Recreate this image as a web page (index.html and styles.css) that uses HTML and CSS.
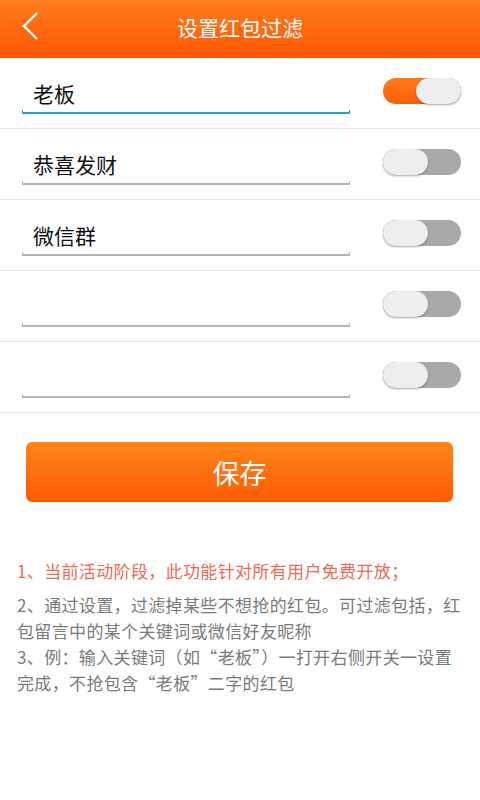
FILE: index.html
```html
<!DOCTYPE html>
<html lang="zh-CN">
<head>
<meta charset="utf-8">
<title>设置红包过滤</title>
<link rel="stylesheet" href="styles.css">
</head>
<body>
<div class="app">
  <header class="topbar">
    <svg class="back" width="20" height="32" viewBox="0 0 20 32"><polyline points="16,3 3,16 16,29" fill="none" stroke="#fff" stroke-width="2.4"/></svg>
    <h1 class="title">设置红包过滤</h1>
  </header>

  <div class="list">
    <div class="row">
      <div class="field active"><span class="value">老板</span><span class="line"></span></div>
      <div class="switch on"><span class="knob"></span></div>
    </div>
    <div class="row">
      <div class="field"><span class="value">恭喜发财</span><span class="line"></span></div>
      <div class="switch"><span class="knob"></span></div>
    </div>
    <div class="row">
      <div class="field"><span class="value">微信群</span><span class="line"></span></div>
      <div class="switch"><span class="knob"></span></div>
    </div>
    <div class="row">
      <div class="field"><span class="value"></span><span class="line"></span></div>
      <div class="switch"><span class="knob"></span></div>
    </div>
    <div class="row">
      <div class="field"><span class="value"></span><span class="line"></span></div>
      <div class="switch"><span class="knob"></span></div>
    </div>
  </div>

  <button class="save">保存</button>

  <div class="notes">
    <p class="note hot">1、当前活动阶段，此功能针对所有用户免费开放；</p>
    <p class="note">2、通过设置，过滤掉某些不想抢的红包。可过滤包括，红包留言中的某个关键词或微信好友昵称<br>3、例：输入关键词（如“老板”）一打开右侧开关一设置完成，不抢包含“老板”二字的红包</p>
  </div>
</div>
</body>
</html>
```

FILE: styles.css
```css
* { box-sizing: border-box; }
html, body { margin: 0; padding: 0; background: #fff; }
body {
  width: 480px;
  height: 800px;
  font-family: "Noto Sans CJK SC", "Roboto", sans-serif;
  overflow: hidden;
}
.topbar {
  height: 58px;
  background: linear-gradient(#ff7c1d, #ff5703);
  display: flex;
  align-items: center;
  justify-content: center;
  position: relative;
}
.back {
  position: absolute;
  left: 21px;
  top: 10px;
}
.title {
  margin: 0;
  color: #fff;
  font-size: 21px;
  font-weight: normal;
  line-height: 30px;
  margin-top: -4px;
}
.list { display: flex; flex-direction: column; }
.row {
  height: 71px;
  border-bottom: 1px solid #e6e6e6;
  display: flex;
  align-items: flex-start;
  padding: 0 19px 0 22px;
  justify-content: space-between;
}
.field {
  width: 328px;
  margin-top: 20px;
  display: flex;
  flex-direction: column;
}
.value {
  height: 32px;
  line-height: 30px;
  padding-left: 11px;
  font-size: 21px;
  color: #111;
}
.line {
  height: 4px;
  border: 1px solid #b4b4b4;
  border-top: none;
  border-bottom-width: 2px;
}
.field.active .line {
  border-color: #2a9fd6;
}
.switch {
  margin-top: 20px;
  width: 78px;
  height: 26px;
  border-radius: 13px;
  background: #a9a9a9;
  display: flex;
  justify-content: flex-start;
}
.switch.on {
  background: linear-gradient(#ff7a1a, #ff5c06);
  justify-content: flex-end;
}
.knob {
  width: 45px;
  height: 26px;
  border-radius: 13px;
  background: #eeeeee;
  box-shadow: 0 1px 2px rgba(0,0,0,0.35);
}
.save {
  display: block;
  margin: 29px 27px 0 26px;
  width: 427px;
  height: 60px;
  border: none;
  border-radius: 6px;
  background: linear-gradient(#ff8619, #ff5a04);
  color: #fff;
  font-family: "Noto Sans CJK SC", sans-serif;
  font-size: 27px;
  padding: 0;
}
.notes {
  margin-top: 56px;
  padding: 0 17px;
}
.note {
  margin: 0;
  font-size: 17px;
  letter-spacing: 0.35px;
  line-height: 26px;
  color: #7a7a7a;
}
.note.hot {
  color: #ee6a55;
  margin-bottom: 8px;
}
```
